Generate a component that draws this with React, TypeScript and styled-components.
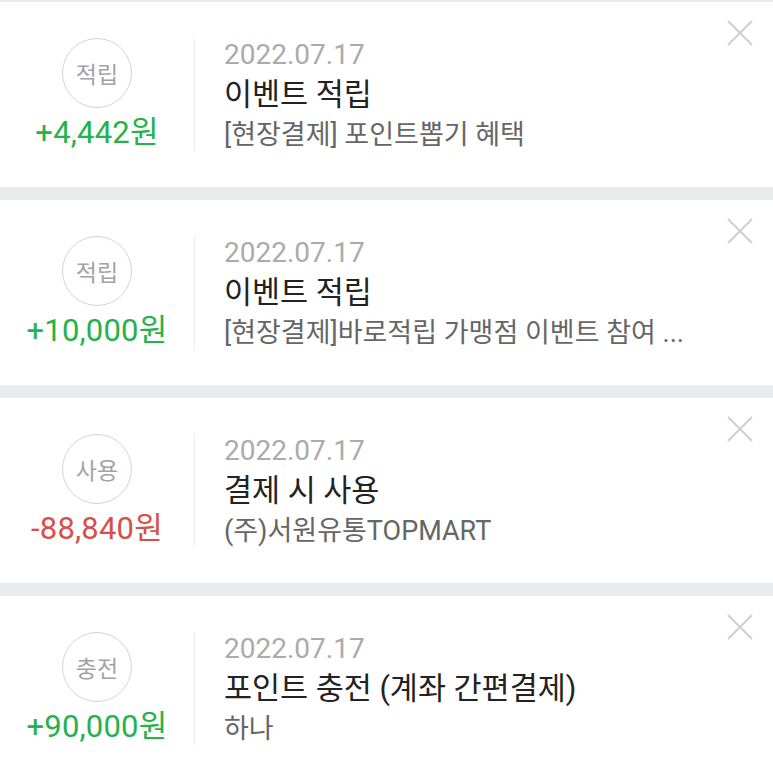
import { createGlobalStyle, styled } from 'styled-components';

type Kind = 'plus' | 'minus';

interface PointItem {
  badge: string;
  amount: string;
  kind: Kind;
  date: string;
  title: string;
  desc: string;
}

const items: PointItem[] = [
  {
    badge: '적립',
    amount: '+4,442원',
    kind: 'plus',
    date: '2022.07.17',
    title: '이벤트 적립',
    desc: '[현장결제] 포인트뽑기 혜택',
  },
  {
    badge: '적립',
    amount: '+10,000원',
    kind: 'plus',
    date: '2022.07.17',
    title: '이벤트 적립',
    desc: '[현장결제]바로적립 가맹점 이벤트 참여 ...',
  },
  {
    badge: '사용',
    amount: '-88,840원',
    kind: 'minus',
    date: '2022.07.17',
    title: '결제 시 사용',
    desc: '(주)서원유통TOPMART',
  },
  {
    badge: '충전',
    amount: '+90,000원',
    kind: 'plus',
    date: '2022.07.17',
    title: '포인트 충전 (계좌 간편결제)',
    desc: '하나',
  },
];

const GlobalStyle = createGlobalStyle`
  html, body {
    margin: 0;
    padding: 0;
    background: #e9ebee;
  }
  body {
    font-family: Roboto, "Noto Sans CJK KR", sans-serif;
  }
`;

const CloseIcon = () => (
  <svg width="26" height="26" viewBox="0 0 26 26" fill="none">
    <path d="M1 1L25 25M25 1L1 25" stroke="#cfcfcf" strokeWidth="2" />
  </svg>
);

const App = () => {
  return (
    <>
      <GlobalStyle />
      <List>
        {items.map((item, i) => (
          <Card key={i}>
            <Summary>
              <Badge>{item.badge}</Badge>
              <Amount $kind={item.kind}>{item.amount}</Amount>
            </Summary>
            <Divider />
            <Detail>
              <DateText>{item.date}</DateText>
              <Title>{item.title}</Title>
              <Desc>{item.desc}</Desc>
            </Detail>
            <CloseButton type="button" aria-label="삭제">
              <CloseIcon />
            </CloseButton>
          </Card>
        ))}
      </List>
    </>
  );
};

export default App;

const List = styled.div`
  display: flex;
  flex-direction: column;
  gap: 13px;
  padding-top: 2px;
  background: #e9ebee;
`;

const Card = styled.div`
  display: flex;
  align-items: center;
  height: 185px;
  background: #ffffff;
  flex-shrink: 0;
`;

const Summary = styled.div`
  width: 194px;
  display: flex;
  flex-direction: column;
  align-items: center;
  gap: 7px;
  flex-shrink: 0;
`;

const Badge = styled.div`
  width: 68px;
  height: 68px;
  border: 1.5px solid #d4d4d4;
  border-radius: 50%;
  display: flex;
  align-items: center;
  justify-content: center;
  font-family: "Noto Sans CJK KR", sans-serif;
  font-size: 23px;
  color: #a3a3a3;
`;

const Amount = styled.div<{ $kind: Kind }>`
  font-size: 31px;
  line-height: 36px;
  color: ${({ $kind }) => ($kind === 'plus' ? '#25b24a' : '#d6504a')};
  letter-spacing: 0.2px;
`;

const Divider = styled.div`
  width: 1px;
  height: 113px;
  background: #eeeeee;
  flex-shrink: 0;
`;

const Detail = styled.div`
  flex: 1;
  display: flex;
  flex-direction: column;
  padding-left: 29px;
  min-width: 0;
`;

const DateText = styled.div`
  font-size: 28px;
  line-height: 40px;
  color: #ababab;
`;

const Title = styled.div`
  font-size: 30.5px;
  line-height: 40px;
  color: #222222;
  white-space: nowrap;
`;

const Desc = styled.div`
  font-size: 27px;
  line-height: 40px;
  color: #666666;
  white-space: nowrap;
`;

const CloseButton = styled.button`
  align-self: flex-start;
  margin: 18px 20px 0 0;
  padding: 0;
  border: none;
  background: none;
  width: 26px;
  height: 26px;
  display: flex;
  cursor: pointer;
`;
